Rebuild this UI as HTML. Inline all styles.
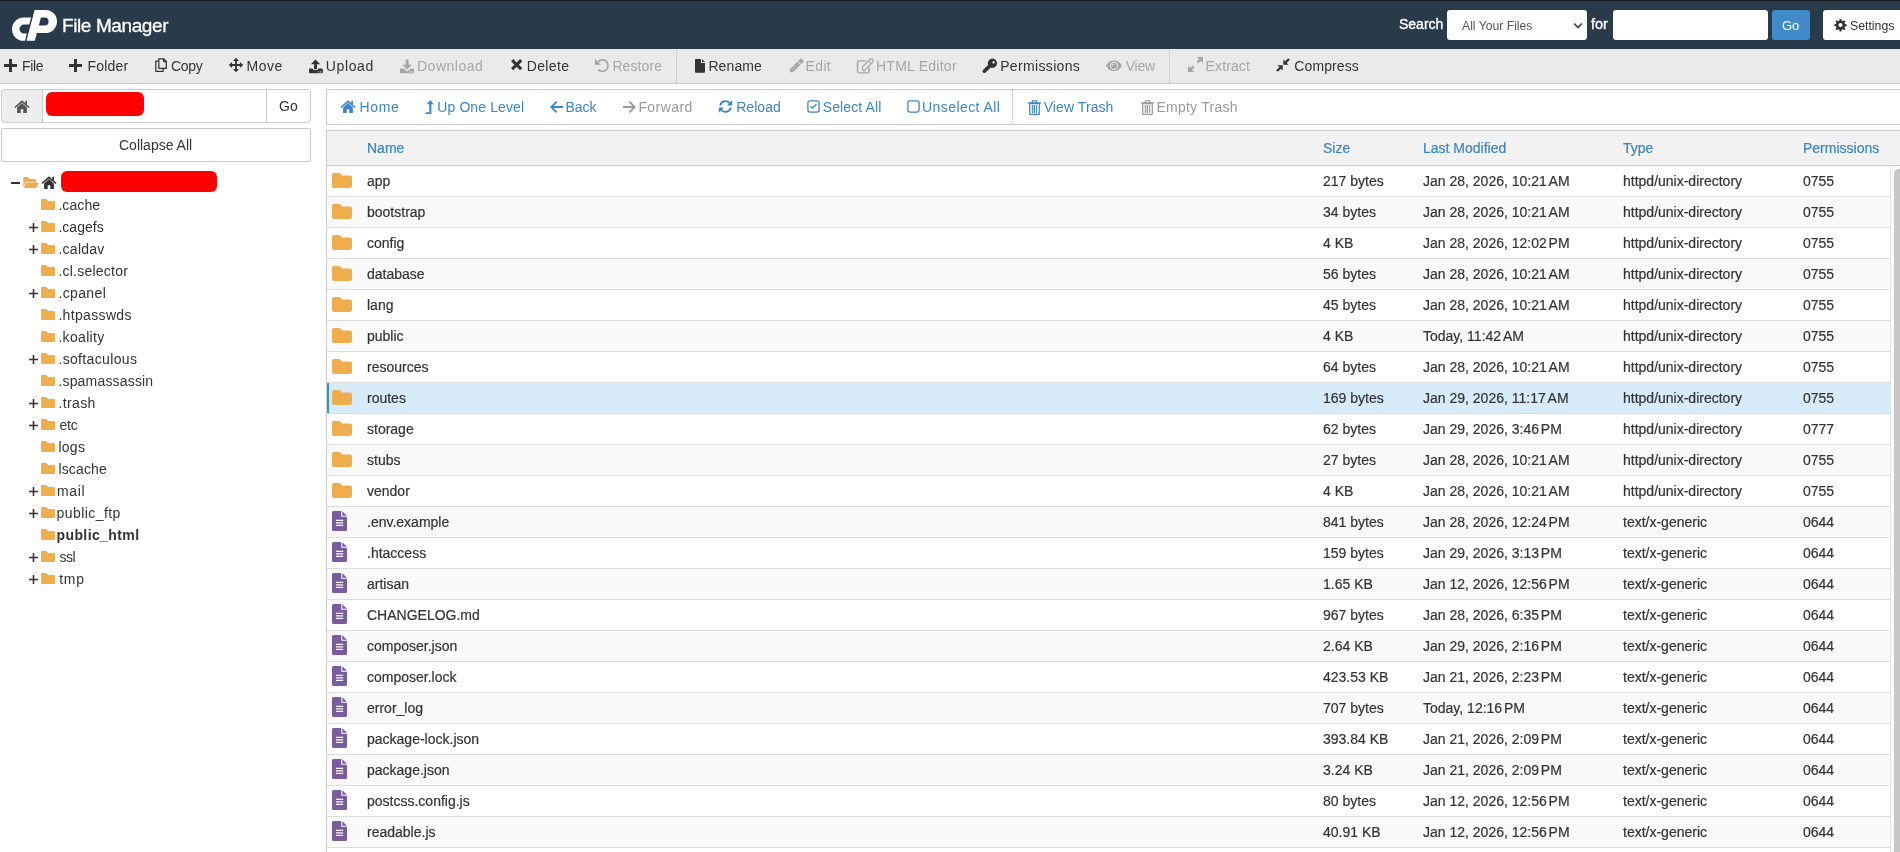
<!DOCTYPE html><html><head><meta charset="utf-8"><style>
*{box-sizing:border-box}
html,body{margin:0;padding:0}
body{-webkit-font-smoothing:antialiased;width:1900px;height:852px;overflow:hidden;position:relative;background:#fff;font-family:"Liberation Sans", sans-serif;color:#333}
.t{position:absolute;white-space:nowrap;line-height:1}
.tb .t{-webkit-text-stroke:0.2px #333}
.abs{position:absolute}
</style></head><body><div style="position:absolute;left:0;top:0;width:1900px;height:852px;will-change:transform;overflow:hidden">

<div class="abs" style="left:0;top:0;width:1900px;height:49px;background:#293a4a;border-top:1px solid #161c22"></div>
<svg class="abs" style="left:0;top:0" width="60" height="49" viewBox="0 0 60 49"><g fill="#fff" fill-rule="evenodd"><path d="M31.1 17.6 L23.6 17.6 A11.6 11.6 0 0 0 23.6 40.8 L25.0 40.8 L26.9 33.5 L23.9 33.5 A4.45 4.45 0 0 1 23.9 24.6 L29.26 24.6 Z"/><path d="M34.6 10 L45.5 10 A11.5 11.5 0 0 1 45.5 33 L36.85 33 L34.8 40.8 L26.5 40.8 Z M40.9 17.6 L44.7 17.6 A3.9 3.9 0 0 1 44.7 25.4 L38.85 25.4 Z"/></g></svg>
<span class="t" style="left:62px;top:16px;font-size:19px;color:#fff;font-weight:normal;letter-spacing:-0.4px;-webkit-text-stroke:0.3px #fff">File Manager</span>
<span class="t" style="left:1399px;top:17px;font-size:14px;color:#fff;font-weight:normal;-webkit-text-stroke:0.35px #fff">Search</span>
<div class="abs" style="left:1447px;top:10px;width:140px;height:30px;background:#fff;border-radius:3px"></div>
<span class="t" style="left:1462px;top:20px;font-size:12.2px;color:#555;font-weight:normal;">All Your Files</span>
<svg class="abs" style="left:1572.5px;top:21.5px" width="11" height="8" viewBox="0 0 11 8"><path d="M1.2 1.5 L5 5.5 L8.8 1.5" stroke="#444" stroke-width="1.8" fill="none"/></svg>
<span class="t" style="left:1591px;top:17px;font-size:14.5px;color:#fff;font-weight:normal;-webkit-text-stroke:0.35px #fff">for</span>
<div class="abs" style="left:1613px;top:10px;width:155px;height:30px;background:#fff;border-radius:3px"></div>
<div class="abs" style="left:1772px;top:10px;width:38px;height:30px;background:#428bca;border-radius:3px"></div>
<span class="t" style="left:1782px;top:19px;font-size:13px;color:#fff;font-weight:normal;">Go</span>
<div class="abs" style="left:1823px;top:10px;width:90px;height:30px;background:#fff;border-radius:3px"></div>
<span class="t" style="left:1850px;top:20px;font-size:12.3px;color:#333;font-weight:normal;">Settings</span>
<svg style="position:absolute;left:1835px;top:19px;color:#333;overflow:visible" width="11" height="12" viewBox="0 0 11 12" fill="#333"><path fill-rule="evenodd" d="M4.6 0h1.8l.3 1.7 1.1.5 1.4-1 1.3 1.3-1 1.4.5 1.1 1.7.3v1.8l-1.7.3-.5 1.1 1 1.4-1.3 1.3-1.4-1-1.1.5-.3 1.7H4.6l-.3-1.7-1.1-.5-1.4 1L.5 9.9l1-1.4L1 7.4-.7 7.1V5.3L1 5l.5-1.1-1-1.4L1.8 1.2l1.4 1 1.1-.5zM5.5 4a2 2 0 1 0 .01 0z"/></svg>
<div class="abs" style="left:0;top:49px;width:1900px;height:35px;background:#eaeaea;border-bottom:1px solid #c9ccd0"></div>
<svg style="position:absolute;left:4px;top:59px;color:#333;overflow:visible" width="13" height="13" viewBox="0 0 13 13" fill="#333"><path d="M5 0h3v5h5v3H8v5H5V8H0V5h5z"/></svg>
<span class="t" style="left:22.1px;top:59px;font-size:14px;color:#333;font-weight:normal;letter-spacing:-0.37px">File</span>
<svg style="position:absolute;left:69px;top:59px;color:#333;overflow:visible" width="13" height="13" viewBox="0 0 13 13" fill="#333"><path d="M5 0h3v5h5v3H8v5H5V8H0V5h5z"/></svg>
<span class="t" style="left:87.5px;top:59px;font-size:14px;color:#333;font-weight:normal;letter-spacing:0.2px">Folder</span>
<svg style="position:absolute;left:155px;top:58px;color:#333;overflow:visible" width="12" height="14" viewBox="0 0 12 14" fill="#333"><g fill="none" stroke="currentColor" stroke-width="1.25" stroke-linejoin="round"><path d="M3.8 0.8H8.6L11.3 3.5V10.4H3.8Z"/><path d="M8.6 0.8V3.5H11.3"/><path d="M3.2 3.2H0.8V13.3H8.2V11"/></g></svg>
<span class="t" style="left:171px;top:59px;font-size:14px;color:#333;font-weight:normal;letter-spacing:-0.33px">Copy</span>
<svg style="position:absolute;left:229.3px;top:58px;color:#333;overflow:visible" width="14" height="14" viewBox="0 0 14 14" fill="#333"><path d="M1 6.1H13V7.9H1Z M6.1 1H7.9V13H6.1Z M7 -0.2L10 3.1H4Z M7 14.2L4 10.9H10Z M-0.2 7L3.1 4V10Z M14.2 7L10.9 10V4Z"/></svg>
<span class="t" style="left:246.6px;top:59px;font-size:14px;color:#333;font-weight:normal;letter-spacing:0.47px">Move</span>
<svg style="position:absolute;left:309px;top:58.5px;color:#333;overflow:visible" width="15" height="15" viewBox="0 0 15 15" fill="#333"><path d="M6.5 0.4L11.2 5.3H1.8Z"/><path d="M5.1 5.2H8V10.2H5.1Z"/><path d="M0 10.6A1 1 0 0 1 1 9.6H3.4Q3.9 11.2 6.5 11.2Q9.1 11.2 9.6 9.6H12.8A1 1 0 0 1 13.8 10.6V13.3A1 1 0 0 1 12.8 14.3H1A1 1 0 0 1 0 13.3Z"/><circle cx="9.6" cy="12.9" r="0.6" fill="#eaeaea"/><circle cx="11.5" cy="12.9" r="0.6" fill="#eaeaea"/></svg>
<span class="t" style="left:325.7px;top:59px;font-size:14px;color:#333;font-weight:normal;letter-spacing:0.66px">Upload</span>
<svg style="position:absolute;left:399.5px;top:58.5px;color:#a6a6a6;overflow:visible" width="15" height="15" viewBox="0 0 15 15" fill="#a6a6a6"><path d="M5.6 0.5H8.6V6H5.6Z"/><path d="M2.4 5.8H11.8L7.1 10.8Z"/><path d="M0 10.6A1 1 0 0 1 1 9.6H3.4L7.1 12.4L10.8 9.6H12.9A1 1 0 0 1 13.9 10.6V13.3A1 1 0 0 1 12.9 14.3H1A1 1 0 0 1 0 13.3Z"/><circle cx="9.8" cy="12.9" r="0.6" fill="#eaeaea"/><circle cx="11.7" cy="12.9" r="0.6" fill="#eaeaea"/></svg>
<span class="t" style="left:417px;top:59px;font-size:14px;color:#a6a6a6;font-weight:normal;letter-spacing:0.5px">Download</span>
<svg style="position:absolute;left:510.6px;top:59.2px;color:#333;overflow:visible" width="11.3" height="11.3" viewBox="0 0 11.3 11.3" fill="#333"><path d="M2.2 0L5.65 3.45 9.1 0 11.3 2.2 7.85 5.65 11.3 9.1 9.1 11.3 5.65 7.85 2.2 11.3 0 9.1 3.45 5.65 0 2.2z"/></svg>
<span class="t" style="left:526.7px;top:59px;font-size:14px;color:#333;font-weight:normal;letter-spacing:0.38px">Delete</span>
<svg style="position:absolute;left:590px;top:55px;color:#a6a6a6;overflow:visible" width="25" height="20" viewBox="0 0 25 20" fill="#a6a6a6"><path d="M8.3 6.5A5.75 5.75 0 1 1 8.1 14.6" fill="none" stroke="currentColor" stroke-width="1.75"/><path d="M4.9 3.8V9.8H10.9Z"/></svg>
<span class="t" style="left:612.4px;top:59px;font-size:14px;color:#a6a6a6;font-weight:normal;letter-spacing:0.1px">Restore</span>
<svg style="position:absolute;left:695px;top:58.9px;color:#333;overflow:visible" width="10" height="13.7" viewBox="0 0 10 13.7" fill="#333"><path d="M0 0.6A0.6 0.6 0 0 1 0.6 0H5.9V4.1H10V13.1A0.6 0.6 0 0 1 9.4 13.7H0.6A0.6 0.6 0 0 1 0 13.1Z"/><path d="M7 0.2L10 3.1H7Z"/></svg>
<span class="t" style="left:708.4px;top:59px;font-size:14px;color:#333;font-weight:normal;letter-spacing:0.12px">Rename</span>
<svg style="position:absolute;left:785px;top:56px;color:#a6a6a6;overflow:visible" width="25" height="20" viewBox="0 0 25 20" fill="#a6a6a6"><g transform="translate(11.1 10.1) rotate(-45)"><path d="M-9.2 0 L-5.6 -2.2 H4.2 V2.2 H-5.6 Z"/><path d="M5 -2.2 H7.8 A1.4 1.4 0 0 1 9.2 -0.8 V0.8 A1.4 1.4 0 0 1 7.8 2.2 H5 Z"/><path d="M-4.6 -0.6 H2.8" stroke="#eaeaea" stroke-width="0.6" stroke-dasharray="1.3 1"/></g></svg>
<span class="t" style="left:805.6px;top:59px;font-size:14px;color:#a6a6a6;font-weight:normal;letter-spacing:0.33px">Edit</span>
<svg style="position:absolute;left:853px;top:55px;color:#a6a6a6;overflow:visible" width="24" height="22" viewBox="0 0 24 22" fill="#a6a6a6"><g fill="none" stroke="currentColor"><path d="M12.9 5.9H6.3A1.8 1.8 0 0 0 4.5 7.7V16.1A1.8 1.8 0 0 0 6.3 17.9H14.3A1.8 1.8 0 0 0 16.1 16.1V12.4" stroke-width="1.4"/><g transform="translate(14.5 9.6) rotate(-45)" stroke-width="1.25"><path d="M-7 2V-0.3L-5 -2H5.2A2 2 0 0 1 5.2 2Z"/><path d="M3.3 -2V2"/></g></g></svg>
<span class="t" style="left:876px;top:59px;font-size:14px;color:#a6a6a6;font-weight:normal;letter-spacing:0.25px">HTML Editor</span>
<svg style="position:absolute;left:980px;top:55px;color:#333;overflow:visible" width="20" height="20" viewBox="0 0 20 20" fill="#333"><path fill-rule="evenodd" d="M12.4 3.6A4.6 4.6 0 1 1 12.39 3.6Z M13.6 6.05A1.25 1.25 0 1 0 13.61 6.05Z"/><path d="M9.6 10.9L4.3 16.2" stroke="currentColor" stroke-width="3.6" stroke-linecap="round"/></svg>
<span class="t" style="left:1000.2px;top:59px;font-size:14px;color:#333;font-weight:normal;letter-spacing:0.34px">Permissions</span>
<svg style="position:absolute;left:1100px;top:55px;color:#a6a6a6;overflow:visible" width="25" height="20" viewBox="0 0 25 20" fill="#a6a6a6"><path fill-rule="evenodd" d="M6 10.7C9.5 3.6 18.5 3.6 22 10.7C18.5 17.8 9.5 17.8 6 10.7Z M14 6.6A4.1 4.1 0 1 0 14.01 6.6Z"/><circle cx="14" cy="10.7" r="3"/><circle cx="12.8" cy="9.5" r="0.85" fill="#eaeaea"/></svg>
<span class="t" style="left:1125.8px;top:59px;font-size:14px;color:#a6a6a6;font-weight:normal;letter-spacing:-0.3px">View</span>
<svg style="position:absolute;left:1187.5px;top:57.3px;color:#a6a6a6;overflow:visible" width="15" height="15" viewBox="0 0 15 15" fill="#a6a6a6"><path d="M15 0V6.3L8.7 0z M0 15V8.7L6.3 15z"/><path d="M9.4 5.6L12.4 2.6M5.6 9.4L2.6 12.4" stroke="currentColor" stroke-width="2.4"/></svg>
<span class="t" style="left:1205.6px;top:59px;font-size:14px;color:#a6a6a6;font-weight:normal;letter-spacing:0.12px">Extract</span>
<svg style="position:absolute;left:1276px;top:58px;color:#333;overflow:visible" width="14" height="14" viewBox="0 0 14 14" fill="#333"><path d="M7.3 6.7V1.4L12.6 6.7z M6.7 7.3H1.4L6.7 12.6z"/><path d="M9.2 4.8L13 1M4.8 9.2L1 13" stroke="currentColor" stroke-width="2.3"/></svg>
<span class="t" style="left:1294.3px;top:59px;font-size:14px;color:#333;font-weight:normal;letter-spacing:0.1px">Compress</span>
<div class="abs" style="left:676px;top:50px;width:0;height:33px;border-left:1px dotted #b8b8b8"></div>
<div class="abs" style="left:1169px;top:50px;width:0;height:33px;border-left:1px dotted #b8b8b8"></div>
<div class="abs" style="left:1px;top:89px;width:310px;height:34px;border:1px solid #ccc;border-radius:4px;background:#fff"></div>
<div class="abs" style="left:1px;top:89px;width:42px;height:34px;border:1px solid #ccc;border-radius:4px 0 0 4px;background:#eee"></div>
<svg style="position:absolute;left:14px;top:100px;color:#555;overflow:visible" width="16" height="13" viewBox="0 0 16 13" fill="#555"><path d="M0.9 7.5L8 1.3 15.1 7.5" fill="none" stroke="currentColor" stroke-width="1.6"/><path d="M11.3 0.8h1.7v3.6h-1.7z"/><path d="M3.1 7.4L8 3.1l4.9 4.3V13H9.3V9.3H6.7V13H3.1z"/></svg>
<div class="abs" style="left:266px;top:89px;width:45px;height:34px;border:1px solid #ccc;border-radius:0 4px 4px 0;background:#fff"></div>
<span class="t" style="left:279px;top:99px;font-size:14px;color:#333;font-weight:normal;">Go</span>
<div class="abs" style="left:46px;top:92px;width:98px;height:24px;background:#f00;border-radius:6px"></div>
<div class="abs" style="left:1px;top:128px;width:310px;height:34px;border:1px solid #ccc;border-radius:2px;background:#fff"></div>
<span class="t" style="left:119px;top:138px;font-size:14px;color:#333;font-weight:normal;">Collapse All</span>
<div class="abs" style="left:11px;top:182px;width:9px;height:2px;background:#333"></div>
<svg style="position:absolute;left:23px;top:177px;color:#f0ad4e;overflow:visible" width="16" height="11" viewBox="0 0 16 11" fill="#f0ad4e"><path d="M0 1.2A1.2 1.2 0 0 1 1.2 0H5.2L6.4 1.9H11.8A1.2 1.2 0 0 1 13 3.1V5.2H2.5L0.3 10.2V1.2Z"/><path d="M2.6 5.4H15.9L13.3 10.9H0.8Z" stroke="#fff" stroke-width="0.7" paint-order="stroke"/></svg>
<svg style="position:absolute;left:41px;top:176px;color:#333;overflow:visible" width="16" height="13" viewBox="0 0 16 13" fill="#333"><path d="M0.9 7.5L8 1.3 15.1 7.5" fill="none" stroke="currentColor" stroke-width="1.6"/><path d="M11.3 0.8h1.7v3.6h-1.7z"/><path d="M3.1 7.4L8 3.1l4.9 4.3V13H9.3V9.3H6.7V13H3.1z"/></svg>
<div class="abs" style="left:61px;top:171px;width:156px;height:21px;background:#f00;border-radius:6px"></div>
<svg style="position:absolute;left:41px;top:199px;color:#f0ad4e;overflow:visible" width="14" height="11" viewBox="0 0 14 11" fill="#f0ad4e"><path d="M0 1.2A1.2 1.2 0 0 1 1.2 0H5.4L7 2H12.8A1.2 1.2 0 0 1 14 3.2V9.8A1.2 1.2 0 0 1 12.8 11H1.2A1.2 1.2 0 0 1 0 9.8Z"/></svg>
<span class="t" style="left:58.4px;top:198px;font-size:14px;color:#333;font-weight:normal;letter-spacing:0.08px">.cache</span>
<svg class="abs" style="left:29px;top:222.7px" width="9" height="9" viewBox="0 0 9 9"><path d="M3.7 0h1.6v3.7H9v1.6H5.3V9H3.7V5.3H0V3.7h3.7z" fill="#333"/></svg>
<svg style="position:absolute;left:41px;top:221px;color:#f0ad4e;overflow:visible" width="14" height="11" viewBox="0 0 14 11" fill="#f0ad4e"><path d="M0 1.2A1.2 1.2 0 0 1 1.2 0H5.4L7 2H12.8A1.2 1.2 0 0 1 14 3.2V9.8A1.2 1.2 0 0 1 12.8 11H1.2A1.2 1.2 0 0 1 0 9.8Z"/></svg>
<span class="t" style="left:58.4px;top:220px;font-size:14px;color:#333;font-weight:normal;letter-spacing:0.02px">.cagefs</span>
<svg class="abs" style="left:29px;top:244.7px" width="9" height="9" viewBox="0 0 9 9"><path d="M3.7 0h1.6v3.7H9v1.6H5.3V9H3.7V5.3H0V3.7h3.7z" fill="#333"/></svg>
<svg style="position:absolute;left:41px;top:243px;color:#f0ad4e;overflow:visible" width="14" height="11" viewBox="0 0 14 11" fill="#f0ad4e"><path d="M0 1.2A1.2 1.2 0 0 1 1.2 0H5.4L7 2H12.8A1.2 1.2 0 0 1 14 3.2V9.8A1.2 1.2 0 0 1 12.8 11H1.2A1.2 1.2 0 0 1 0 9.8Z"/></svg>
<span class="t" style="left:58.4px;top:242px;font-size:14px;color:#333;font-weight:normal;letter-spacing:0.27px">.caldav</span>
<svg style="position:absolute;left:41px;top:265px;color:#f0ad4e;overflow:visible" width="14" height="11" viewBox="0 0 14 11" fill="#f0ad4e"><path d="M0 1.2A1.2 1.2 0 0 1 1.2 0H5.4L7 2H12.8A1.2 1.2 0 0 1 14 3.2V9.8A1.2 1.2 0 0 1 12.8 11H1.2A1.2 1.2 0 0 1 0 9.8Z"/></svg>
<span class="t" style="left:58.4px;top:264px;font-size:14px;color:#333;font-weight:normal;letter-spacing:0.23px">.cl.selector</span>
<svg class="abs" style="left:29px;top:288.7px" width="9" height="9" viewBox="0 0 9 9"><path d="M3.7 0h1.6v3.7H9v1.6H5.3V9H3.7V5.3H0V3.7h3.7z" fill="#333"/></svg>
<svg style="position:absolute;left:41px;top:287px;color:#f0ad4e;overflow:visible" width="14" height="11" viewBox="0 0 14 11" fill="#f0ad4e"><path d="M0 1.2A1.2 1.2 0 0 1 1.2 0H5.4L7 2H12.8A1.2 1.2 0 0 1 14 3.2V9.8A1.2 1.2 0 0 1 12.8 11H1.2A1.2 1.2 0 0 1 0 9.8Z"/></svg>
<span class="t" style="left:58.4px;top:286px;font-size:14px;color:#333;font-weight:normal;letter-spacing:0.37px">.cpanel</span>
<svg style="position:absolute;left:41px;top:309px;color:#f0ad4e;overflow:visible" width="14" height="11" viewBox="0 0 14 11" fill="#f0ad4e"><path d="M0 1.2A1.2 1.2 0 0 1 1.2 0H5.4L7 2H12.8A1.2 1.2 0 0 1 14 3.2V9.8A1.2 1.2 0 0 1 12.8 11H1.2A1.2 1.2 0 0 1 0 9.8Z"/></svg>
<span class="t" style="left:58.4px;top:308px;font-size:14px;color:#333;font-weight:normal;letter-spacing:0.34px">.htpasswds</span>
<svg style="position:absolute;left:41px;top:331px;color:#f0ad4e;overflow:visible" width="14" height="11" viewBox="0 0 14 11" fill="#f0ad4e"><path d="M0 1.2A1.2 1.2 0 0 1 1.2 0H5.4L7 2H12.8A1.2 1.2 0 0 1 14 3.2V9.8A1.2 1.2 0 0 1 12.8 11H1.2A1.2 1.2 0 0 1 0 9.8Z"/></svg>
<span class="t" style="left:58.4px;top:330px;font-size:14px;color:#333;font-weight:normal;letter-spacing:0.33px">.koality</span>
<svg class="abs" style="left:29px;top:354.7px" width="9" height="9" viewBox="0 0 9 9"><path d="M3.7 0h1.6v3.7H9v1.6H5.3V9H3.7V5.3H0V3.7h3.7z" fill="#333"/></svg>
<svg style="position:absolute;left:41px;top:353px;color:#f0ad4e;overflow:visible" width="14" height="11" viewBox="0 0 14 11" fill="#f0ad4e"><path d="M0 1.2A1.2 1.2 0 0 1 1.2 0H5.4L7 2H12.8A1.2 1.2 0 0 1 14 3.2V9.8A1.2 1.2 0 0 1 12.8 11H1.2A1.2 1.2 0 0 1 0 9.8Z"/></svg>
<span class="t" style="left:58.4px;top:352px;font-size:14px;color:#333;font-weight:normal;letter-spacing:0.35px">.softaculous</span>
<svg style="position:absolute;left:41px;top:375px;color:#f0ad4e;overflow:visible" width="14" height="11" viewBox="0 0 14 11" fill="#f0ad4e"><path d="M0 1.2A1.2 1.2 0 0 1 1.2 0H5.4L7 2H12.8A1.2 1.2 0 0 1 14 3.2V9.8A1.2 1.2 0 0 1 12.8 11H1.2A1.2 1.2 0 0 1 0 9.8Z"/></svg>
<span class="t" style="left:58.4px;top:374px;font-size:14px;color:#333;font-weight:normal;letter-spacing:0.18px">.spamassassin</span>
<svg class="abs" style="left:29px;top:398.7px" width="9" height="9" viewBox="0 0 9 9"><path d="M3.7 0h1.6v3.7H9v1.6H5.3V9H3.7V5.3H0V3.7h3.7z" fill="#333"/></svg>
<svg style="position:absolute;left:41px;top:397px;color:#f0ad4e;overflow:visible" width="14" height="11" viewBox="0 0 14 11" fill="#f0ad4e"><path d="M0 1.2A1.2 1.2 0 0 1 1.2 0H5.4L7 2H12.8A1.2 1.2 0 0 1 14 3.2V9.8A1.2 1.2 0 0 1 12.8 11H1.2A1.2 1.2 0 0 1 0 9.8Z"/></svg>
<span class="t" style="left:58.4px;top:396px;font-size:14px;color:#333;font-weight:normal;letter-spacing:0.38px">.trash</span>
<svg class="abs" style="left:29px;top:420.7px" width="9" height="9" viewBox="0 0 9 9"><path d="M3.7 0h1.6v3.7H9v1.6H5.3V9H3.7V5.3H0V3.7h3.7z" fill="#333"/></svg>
<svg style="position:absolute;left:41px;top:419px;color:#f0ad4e;overflow:visible" width="14" height="11" viewBox="0 0 14 11" fill="#f0ad4e"><path d="M0 1.2A1.2 1.2 0 0 1 1.2 0H5.4L7 2H12.8A1.2 1.2 0 0 1 14 3.2V9.8A1.2 1.2 0 0 1 12.8 11H1.2A1.2 1.2 0 0 1 0 9.8Z"/></svg>
<span class="t" style="left:59.4px;top:418px;font-size:14px;color:#333;font-weight:normal;letter-spacing:-0.1px">etc</span>
<svg style="position:absolute;left:41px;top:441px;color:#f0ad4e;overflow:visible" width="14" height="11" viewBox="0 0 14 11" fill="#f0ad4e"><path d="M0 1.2A1.2 1.2 0 0 1 1.2 0H5.4L7 2H12.8A1.2 1.2 0 0 1 14 3.2V9.8A1.2 1.2 0 0 1 12.8 11H1.2A1.2 1.2 0 0 1 0 9.8Z"/></svg>
<span class="t" style="left:58.4px;top:440px;font-size:14px;color:#333;font-weight:normal;letter-spacing:0.27px">logs</span>
<svg style="position:absolute;left:41px;top:463px;color:#f0ad4e;overflow:visible" width="14" height="11" viewBox="0 0 14 11" fill="#f0ad4e"><path d="M0 1.2A1.2 1.2 0 0 1 1.2 0H5.4L7 2H12.8A1.2 1.2 0 0 1 14 3.2V9.8A1.2 1.2 0 0 1 12.8 11H1.2A1.2 1.2 0 0 1 0 9.8Z"/></svg>
<span class="t" style="left:58.4px;top:462px;font-size:14px;color:#333;font-weight:normal;letter-spacing:0.15px">lscache</span>
<svg class="abs" style="left:29px;top:486.7px" width="9" height="9" viewBox="0 0 9 9"><path d="M3.7 0h1.6v3.7H9v1.6H5.3V9H3.7V5.3H0V3.7h3.7z" fill="#333"/></svg>
<svg style="position:absolute;left:41px;top:485px;color:#f0ad4e;overflow:visible" width="14" height="11" viewBox="0 0 14 11" fill="#f0ad4e"><path d="M0 1.2A1.2 1.2 0 0 1 1.2 0H5.4L7 2H12.8A1.2 1.2 0 0 1 14 3.2V9.8A1.2 1.2 0 0 1 12.8 11H1.2A1.2 1.2 0 0 1 0 9.8Z"/></svg>
<span class="t" style="left:56.9px;top:484px;font-size:14px;color:#333;font-weight:normal;letter-spacing:0.67px">mail</span>
<svg class="abs" style="left:29px;top:508.7px" width="9" height="9" viewBox="0 0 9 9"><path d="M3.7 0h1.6v3.7H9v1.6H5.3V9H3.7V5.3H0V3.7h3.7z" fill="#333"/></svg>
<svg style="position:absolute;left:41px;top:507px;color:#f0ad4e;overflow:visible" width="14" height="11" viewBox="0 0 14 11" fill="#f0ad4e"><path d="M0 1.2A1.2 1.2 0 0 1 1.2 0H5.4L7 2H12.8A1.2 1.2 0 0 1 14 3.2V9.8A1.2 1.2 0 0 1 12.8 11H1.2A1.2 1.2 0 0 1 0 9.8Z"/></svg>
<span class="t" style="left:56.5px;top:506px;font-size:14px;color:#333;font-weight:normal;letter-spacing:0.43px">public_ftp</span>
<svg style="position:absolute;left:41px;top:529px;color:#f0ad4e;overflow:visible" width="14" height="11" viewBox="0 0 14 11" fill="#f0ad4e"><path d="M0 1.2A1.2 1.2 0 0 1 1.2 0H5.4L7 2H12.8A1.2 1.2 0 0 1 14 3.2V9.8A1.2 1.2 0 0 1 12.8 11H1.2A1.2 1.2 0 0 1 0 9.8Z"/></svg>
<span class="t" style="left:56.5px;top:528px;font-size:14px;color:#333;font-weight:bold;letter-spacing:0.4px">public_html</span>
<svg class="abs" style="left:29px;top:552.7px" width="9" height="9" viewBox="0 0 9 9"><path d="M3.7 0h1.6v3.7H9v1.6H5.3V9H3.7V5.3H0V3.7h3.7z" fill="#333"/></svg>
<svg style="position:absolute;left:41px;top:551px;color:#f0ad4e;overflow:visible" width="14" height="11" viewBox="0 0 14 11" fill="#f0ad4e"><path d="M0 1.2A1.2 1.2 0 0 1 1.2 0H5.4L7 2H12.8A1.2 1.2 0 0 1 14 3.2V9.8A1.2 1.2 0 0 1 12.8 11H1.2A1.2 1.2 0 0 1 0 9.8Z"/></svg>
<span class="t" style="left:59.4px;top:550px;font-size:14px;color:#333;font-weight:normal;letter-spacing:-0.4px">ssl</span>
<svg class="abs" style="left:29px;top:574.7px" width="9" height="9" viewBox="0 0 9 9"><path d="M3.7 0h1.6v3.7H9v1.6H5.3V9H3.7V5.3H0V3.7h3.7z" fill="#333"/></svg>
<svg style="position:absolute;left:41px;top:573px;color:#f0ad4e;overflow:visible" width="14" height="11" viewBox="0 0 14 11" fill="#f0ad4e"><path d="M0 1.2A1.2 1.2 0 0 1 1.2 0H5.4L7 2H12.8A1.2 1.2 0 0 1 14 3.2V9.8A1.2 1.2 0 0 1 12.8 11H1.2A1.2 1.2 0 0 1 0 9.8Z"/></svg>
<span class="t" style="left:59.2px;top:572px;font-size:14px;color:#333;font-weight:normal;letter-spacing:0.7px">tmp</span>
<div class="abs" style="left:326px;top:89px;width:1580px;height:36px;border:1px solid #ccc;background:#fff"></div>
<div class="abs" style="left:1012px;top:90px;width:0;height:34px;border-left:1px dotted #c0c0c0"></div>
<svg style="position:absolute;left:339.5px;top:99.7px;color:#3a85c6;overflow:visible" width="16" height="13" viewBox="0 0 16 13" fill="#3a85c6"><path d="M0.9 7.5L8 1.3 15.1 7.5" fill="none" stroke="currentColor" stroke-width="1.6"/><path d="M11.3 0.8h1.7v3.6h-1.7z"/><path d="M3.1 7.4L8 3.1l4.9 4.3V13H9.3V9.3H6.7V13H3.1z"/></svg>
<span class="t" style="left:359.4px;top:100px;font-size:14px;color:#3a85c6;font-weight:normal;letter-spacing:0.7px">Home</span>
<svg style="position:absolute;left:425px;top:99.6px;color:#3a85c6;overflow:visible" width="9" height="14" viewBox="0 0 9 14" fill="#3a85c6"><path d="M5.3 0L8.8 4.3H1.8Z"/><path d="M4.3 4h2.1v10h-2.1z"/><path d="M0.2 14L1.4 12.2H4.4V14Z"/></svg>
<span class="t" style="left:437.3px;top:100px;font-size:14px;color:#3a85c6;font-weight:normal;letter-spacing:0.1px">Up One Level</span>
<svg style="position:absolute;left:550px;top:101px;color:#3a85c6;overflow:visible" width="13" height="12" viewBox="0 0 13 12" fill="#3a85c6"><path d="M6 0l1.3 1.3L3.5 5.1H13v1.8H3.5l3.8 3.8L6 12 0 6z"/></svg>
<span class="t" style="left:565.6px;top:100px;font-size:14px;color:#3a85c6;font-weight:normal;letter-spacing:-0.07px">Back</span>
<svg style="position:absolute;left:623px;top:101px;color:#999;overflow:visible" width="13" height="12" viewBox="0 0 13 12" fill="#999"><path d="M7 0L5.7 1.3l3.8 3.8H0v1.8h9.5l-3.8 3.8L7 12l6-6z"/></svg>
<span class="t" style="left:638.4px;top:100px;font-size:14px;color:#999;font-weight:normal;letter-spacing:0.43px">Forward</span>
<svg style="position:absolute;left:718px;top:99.0px;color:#3a85c6;overflow:visible" width="15" height="15" viewBox="0 0 15 15" fill="#3a85c6"><path d="M7.5 1.2a6.3 6.3 0 0 1 4.7 2.1L14.2 1.3V6.4H9.1l1.8-1.8A4.5 4.5 0 0 0 3.2 6.4H1.3A6.3 6.3 0 0 1 7.5 1.2zM13.7 8.6A6.3 6.3 0 0 1 2.8 11.7L0.8 13.7V8.6h5.1L4.1 10.4A4.5 4.5 0 0 0 11.8 8.6z"/></svg>
<span class="t" style="left:736.2px;top:100px;font-size:14px;color:#3a85c6;font-weight:normal;letter-spacing:0.04px">Reload</span>
<svg style="position:absolute;left:807px;top:100.0px;color:#3a85c6;overflow:visible" width="13" height="13" viewBox="0 0 13 13" fill="#3a85c6"><rect x="0.9" y="0.9" width="11.2" height="11.2" rx="1.8" fill="none" stroke="currentColor" stroke-width="1.3"/><path d="M3 6.6l0.9-0.9 1.6 1.6 3.5-3.5 0.9 0.9-4.4 4.4z"/></svg>
<span class="t" style="left:822.8px;top:100px;font-size:14px;color:#3a85c6;font-weight:normal;letter-spacing:0.1px">Select All</span>
<svg style="position:absolute;left:907px;top:100.0px;color:#3a85c6;overflow:visible" width="13" height="13" viewBox="0 0 13 13" fill="#3a85c6"><rect x="0.9" y="0.9" width="11.2" height="11.2" rx="1.8" fill="none" stroke="currentColor" stroke-width="1.3"/></svg>
<span class="t" style="left:922px;top:100px;font-size:14px;color:#3a85c6;font-weight:normal;letter-spacing:0.43px">Unselect All</span>
<svg style="position:absolute;left:1028px;top:100px;color:#3a85c6;overflow:visible" width="13" height="15" viewBox="0 0 13 15" fill="#3a85c6"><path fill-rule="evenodd" d="M3.8 0.2h5.4v2.1h3.8v1.2H0V2.3h3.8zM5 1.2v1.1h3V1.2z M1.1 3.5h10.8V14a1 1 0 0 1-1 1H2.1a1 1 0 0 1-1-1z M2.3 4.2v9.6h8.4V4.2z"/><path d="M3.8 5h1.1v8H3.8zM6 5h1v8H6zM8.1 5h1.1v8H8.1z"/><path d="M4.9 5H6v8H4.9z" opacity="0.35"/></svg>
<span class="t" style="left:1043.7px;top:100px;font-size:14px;color:#3a85c6;font-weight:normal;letter-spacing:0.08px">View Trash</span>
<svg style="position:absolute;left:1141px;top:100px;color:#999;overflow:visible" width="13" height="15" viewBox="0 0 13 15" fill="#999"><path fill-rule="evenodd" d="M3.8 0.2h5.4v2.1h3.8v1.2H0V2.3h3.8zM5 1.2v1.1h3V1.2z M1.1 3.5h10.8V14a1 1 0 0 1-1 1H2.1a1 1 0 0 1-1-1z M2.3 4.2v9.6h8.4V4.2z"/><path d="M3.8 5h1.1v8H3.8zM6 5h1v8H6zM8.1 5h1.1v8H8.1z"/><path d="M4.9 5H6v8H4.9z" opacity="0.35"/></svg>
<span class="t" style="left:1156.4px;top:100px;font-size:14px;color:#999;font-weight:normal;letter-spacing:0.26px">Empty Trash</span>
<div class="abs" style="left:326px;top:130px;width:1580px;height:730px;border:1px solid #ccc;border-right:0"></div>
<div class="abs" style="left:327px;top:131px;width:1580px;height:35px;background:#f2f2f2;border-bottom:1px solid #ccc"></div>
<span class="t" style="left:367px;top:141px;font-size:14px;color:#3a85c6;font-weight:normal;-webkit-text-stroke:0.2px #3a85c6">Name</span>
<span class="t" style="left:1323px;top:141px;font-size:14px;color:#3a85c6;font-weight:normal;-webkit-text-stroke:0.2px #3a85c6">Size</span>
<span class="t" style="left:1423px;top:141px;font-size:14px;color:#3a85c6;font-weight:normal;-webkit-text-stroke:0.2px #3a85c6">Last Modified</span>
<span class="t" style="left:1623px;top:141px;font-size:14px;color:#3a85c6;font-weight:normal;-webkit-text-stroke:0.2px #3a85c6">Type</span>
<span class="t" style="left:1803px;top:141px;font-size:14px;color:#3a85c6;font-weight:normal;-webkit-text-stroke:0.2px #3a85c6">Permissions</span>
<div class="abs" style="left:327px;top:166px;width:1563px;height:31px;background:#fff;border-bottom:1px solid #ddd"></div>
<svg style="position:absolute;left:332px;top:173px;color:#f0ad4e;overflow:visible" width="20" height="15" viewBox="0 0 20 15" fill="#f0ad4e"><path d="M0 2A2 2 0 0 1 2 0H7.8L10 2.6H18A2 2 0 0 1 20 4.6V13A2 2 0 0 1 18 15H2A2 2 0 0 1 0 13Z"/></svg>
<span class="t" style="left:367px;top:174px;font-size:14px;color:#333;font-weight:normal;-webkit-text-stroke:0.2px #333">app</span>
<span class="t" style="left:1323px;top:174px;font-size:14px;color:#333;font-weight:normal;-webkit-text-stroke:0.2px #333">217 bytes</span>
<span class="t" style="left:1423px;top:174px;font-size:14px;color:#333;font-weight:normal;-webkit-text-stroke:0.2px #333">Jan 28, 2026, 10:21<span style="letter-spacing:-1px"> </span>AM</span>
<span class="t" style="left:1623px;top:174px;font-size:14px;color:#333;font-weight:normal;-webkit-text-stroke:0.2px #333">httpd/unix-directory</span>
<span class="t" style="left:1803px;top:174px;font-size:14px;color:#333;font-weight:normal;-webkit-text-stroke:0.2px #333">0755</span>
<div class="abs" style="left:327px;top:197px;width:1563px;height:31px;background:#f9f9f9;border-bottom:1px solid #ddd"></div>
<svg style="position:absolute;left:332px;top:204px;color:#f0ad4e;overflow:visible" width="20" height="15" viewBox="0 0 20 15" fill="#f0ad4e"><path d="M0 2A2 2 0 0 1 2 0H7.8L10 2.6H18A2 2 0 0 1 20 4.6V13A2 2 0 0 1 18 15H2A2 2 0 0 1 0 13Z"/></svg>
<span class="t" style="left:367px;top:205px;font-size:14px;color:#333;font-weight:normal;-webkit-text-stroke:0.2px #333">bootstrap</span>
<span class="t" style="left:1323px;top:205px;font-size:14px;color:#333;font-weight:normal;-webkit-text-stroke:0.2px #333">34 bytes</span>
<span class="t" style="left:1423px;top:205px;font-size:14px;color:#333;font-weight:normal;-webkit-text-stroke:0.2px #333">Jan 28, 2026, 10:21<span style="letter-spacing:-1px"> </span>AM</span>
<span class="t" style="left:1623px;top:205px;font-size:14px;color:#333;font-weight:normal;-webkit-text-stroke:0.2px #333">httpd/unix-directory</span>
<span class="t" style="left:1803px;top:205px;font-size:14px;color:#333;font-weight:normal;-webkit-text-stroke:0.2px #333">0755</span>
<div class="abs" style="left:327px;top:228px;width:1563px;height:31px;background:#fff;border-bottom:1px solid #ddd"></div>
<svg style="position:absolute;left:332px;top:235px;color:#f0ad4e;overflow:visible" width="20" height="15" viewBox="0 0 20 15" fill="#f0ad4e"><path d="M0 2A2 2 0 0 1 2 0H7.8L10 2.6H18A2 2 0 0 1 20 4.6V13A2 2 0 0 1 18 15H2A2 2 0 0 1 0 13Z"/></svg>
<span class="t" style="left:367px;top:236px;font-size:14px;color:#333;font-weight:normal;-webkit-text-stroke:0.2px #333">config</span>
<span class="t" style="left:1323px;top:236px;font-size:14px;color:#333;font-weight:normal;-webkit-text-stroke:0.2px #333">4 KB</span>
<span class="t" style="left:1423px;top:236px;font-size:14px;color:#333;font-weight:normal;-webkit-text-stroke:0.2px #333">Jan 28, 2026, 12:02<span style="letter-spacing:-1px"> </span>PM</span>
<span class="t" style="left:1623px;top:236px;font-size:14px;color:#333;font-weight:normal;-webkit-text-stroke:0.2px #333">httpd/unix-directory</span>
<span class="t" style="left:1803px;top:236px;font-size:14px;color:#333;font-weight:normal;-webkit-text-stroke:0.2px #333">0755</span>
<div class="abs" style="left:327px;top:259px;width:1563px;height:31px;background:#f9f9f9;border-bottom:1px solid #ddd"></div>
<svg style="position:absolute;left:332px;top:266px;color:#f0ad4e;overflow:visible" width="20" height="15" viewBox="0 0 20 15" fill="#f0ad4e"><path d="M0 2A2 2 0 0 1 2 0H7.8L10 2.6H18A2 2 0 0 1 20 4.6V13A2 2 0 0 1 18 15H2A2 2 0 0 1 0 13Z"/></svg>
<span class="t" style="left:367px;top:267px;font-size:14px;color:#333;font-weight:normal;-webkit-text-stroke:0.2px #333">database</span>
<span class="t" style="left:1323px;top:267px;font-size:14px;color:#333;font-weight:normal;-webkit-text-stroke:0.2px #333">56 bytes</span>
<span class="t" style="left:1423px;top:267px;font-size:14px;color:#333;font-weight:normal;-webkit-text-stroke:0.2px #333">Jan 28, 2026, 10:21<span style="letter-spacing:-1px"> </span>AM</span>
<span class="t" style="left:1623px;top:267px;font-size:14px;color:#333;font-weight:normal;-webkit-text-stroke:0.2px #333">httpd/unix-directory</span>
<span class="t" style="left:1803px;top:267px;font-size:14px;color:#333;font-weight:normal;-webkit-text-stroke:0.2px #333">0755</span>
<div class="abs" style="left:327px;top:290px;width:1563px;height:31px;background:#fff;border-bottom:1px solid #ddd"></div>
<svg style="position:absolute;left:332px;top:297px;color:#f0ad4e;overflow:visible" width="20" height="15" viewBox="0 0 20 15" fill="#f0ad4e"><path d="M0 2A2 2 0 0 1 2 0H7.8L10 2.6H18A2 2 0 0 1 20 4.6V13A2 2 0 0 1 18 15H2A2 2 0 0 1 0 13Z"/></svg>
<span class="t" style="left:367px;top:298px;font-size:14px;color:#333;font-weight:normal;-webkit-text-stroke:0.2px #333">lang</span>
<span class="t" style="left:1323px;top:298px;font-size:14px;color:#333;font-weight:normal;-webkit-text-stroke:0.2px #333">45 bytes</span>
<span class="t" style="left:1423px;top:298px;font-size:14px;color:#333;font-weight:normal;-webkit-text-stroke:0.2px #333">Jan 28, 2026, 10:21<span style="letter-spacing:-1px"> </span>AM</span>
<span class="t" style="left:1623px;top:298px;font-size:14px;color:#333;font-weight:normal;-webkit-text-stroke:0.2px #333">httpd/unix-directory</span>
<span class="t" style="left:1803px;top:298px;font-size:14px;color:#333;font-weight:normal;-webkit-text-stroke:0.2px #333">0755</span>
<div class="abs" style="left:327px;top:321px;width:1563px;height:31px;background:#f9f9f9;border-bottom:1px solid #ddd"></div>
<svg style="position:absolute;left:332px;top:328px;color:#f0ad4e;overflow:visible" width="20" height="15" viewBox="0 0 20 15" fill="#f0ad4e"><path d="M0 2A2 2 0 0 1 2 0H7.8L10 2.6H18A2 2 0 0 1 20 4.6V13A2 2 0 0 1 18 15H2A2 2 0 0 1 0 13Z"/></svg>
<span class="t" style="left:367px;top:329px;font-size:14px;color:#333;font-weight:normal;-webkit-text-stroke:0.2px #333">public</span>
<span class="t" style="left:1323px;top:329px;font-size:14px;color:#333;font-weight:normal;-webkit-text-stroke:0.2px #333">4 KB</span>
<span class="t" style="left:1423px;top:329px;font-size:14px;color:#333;font-weight:normal;-webkit-text-stroke:0.2px #333">Today, 11:42<span style="letter-spacing:-1px"> </span>AM</span>
<span class="t" style="left:1623px;top:329px;font-size:14px;color:#333;font-weight:normal;-webkit-text-stroke:0.2px #333">httpd/unix-directory</span>
<span class="t" style="left:1803px;top:329px;font-size:14px;color:#333;font-weight:normal;-webkit-text-stroke:0.2px #333">0755</span>
<div class="abs" style="left:327px;top:352px;width:1563px;height:31px;background:#fff;border-bottom:1px solid #ddd"></div>
<svg style="position:absolute;left:332px;top:359px;color:#f0ad4e;overflow:visible" width="20" height="15" viewBox="0 0 20 15" fill="#f0ad4e"><path d="M0 2A2 2 0 0 1 2 0H7.8L10 2.6H18A2 2 0 0 1 20 4.6V13A2 2 0 0 1 18 15H2A2 2 0 0 1 0 13Z"/></svg>
<span class="t" style="left:367px;top:360px;font-size:14px;color:#333;font-weight:normal;-webkit-text-stroke:0.2px #333">resources</span>
<span class="t" style="left:1323px;top:360px;font-size:14px;color:#333;font-weight:normal;-webkit-text-stroke:0.2px #333">64 bytes</span>
<span class="t" style="left:1423px;top:360px;font-size:14px;color:#333;font-weight:normal;-webkit-text-stroke:0.2px #333">Jan 28, 2026, 10:21<span style="letter-spacing:-1px"> </span>AM</span>
<span class="t" style="left:1623px;top:360px;font-size:14px;color:#333;font-weight:normal;-webkit-text-stroke:0.2px #333">httpd/unix-directory</span>
<span class="t" style="left:1803px;top:360px;font-size:14px;color:#333;font-weight:normal;-webkit-text-stroke:0.2px #333">0755</span>
<div class="abs" style="left:327px;top:383px;width:1563px;height:31px;background:#d7ebf8;border-bottom:1px solid #ddd"></div>
<div class="abs" style="left:327px;top:383px;width:2px;height:30px;background:#2a94dc"></div>
<svg style="position:absolute;left:332px;top:390px;color:#f0ad4e;overflow:visible" width="20" height="15" viewBox="0 0 20 15" fill="#f0ad4e"><path d="M0 2A2 2 0 0 1 2 0H7.8L10 2.6H18A2 2 0 0 1 20 4.6V13A2 2 0 0 1 18 15H2A2 2 0 0 1 0 13Z"/></svg>
<span class="t" style="left:367px;top:391px;font-size:14px;color:#333;font-weight:normal;-webkit-text-stroke:0.2px #333">routes</span>
<span class="t" style="left:1323px;top:391px;font-size:14px;color:#333;font-weight:normal;-webkit-text-stroke:0.2px #333">169 bytes</span>
<span class="t" style="left:1423px;top:391px;font-size:14px;color:#333;font-weight:normal;-webkit-text-stroke:0.2px #333">Jan 29, 2026, 11:17<span style="letter-spacing:-1px"> </span>AM</span>
<span class="t" style="left:1623px;top:391px;font-size:14px;color:#333;font-weight:normal;-webkit-text-stroke:0.2px #333">httpd/unix-directory</span>
<span class="t" style="left:1803px;top:391px;font-size:14px;color:#333;font-weight:normal;-webkit-text-stroke:0.2px #333">0755</span>
<div class="abs" style="left:327px;top:414px;width:1563px;height:31px;background:#fff;border-bottom:1px solid #ddd"></div>
<svg style="position:absolute;left:332px;top:421px;color:#f0ad4e;overflow:visible" width="20" height="15" viewBox="0 0 20 15" fill="#f0ad4e"><path d="M0 2A2 2 0 0 1 2 0H7.8L10 2.6H18A2 2 0 0 1 20 4.6V13A2 2 0 0 1 18 15H2A2 2 0 0 1 0 13Z"/></svg>
<span class="t" style="left:367px;top:422px;font-size:14px;color:#333;font-weight:normal;-webkit-text-stroke:0.2px #333">storage</span>
<span class="t" style="left:1323px;top:422px;font-size:14px;color:#333;font-weight:normal;-webkit-text-stroke:0.2px #333">62 bytes</span>
<span class="t" style="left:1423px;top:422px;font-size:14px;color:#333;font-weight:normal;-webkit-text-stroke:0.2px #333">Jan 29, 2026, 3:46<span style="letter-spacing:-1px"> </span>PM</span>
<span class="t" style="left:1623px;top:422px;font-size:14px;color:#333;font-weight:normal;-webkit-text-stroke:0.2px #333">httpd/unix-directory</span>
<span class="t" style="left:1803px;top:422px;font-size:14px;color:#333;font-weight:normal;-webkit-text-stroke:0.2px #333">0777</span>
<div class="abs" style="left:327px;top:445px;width:1563px;height:31px;background:#f9f9f9;border-bottom:1px solid #ddd"></div>
<svg style="position:absolute;left:332px;top:452px;color:#f0ad4e;overflow:visible" width="20" height="15" viewBox="0 0 20 15" fill="#f0ad4e"><path d="M0 2A2 2 0 0 1 2 0H7.8L10 2.6H18A2 2 0 0 1 20 4.6V13A2 2 0 0 1 18 15H2A2 2 0 0 1 0 13Z"/></svg>
<span class="t" style="left:367px;top:453px;font-size:14px;color:#333;font-weight:normal;-webkit-text-stroke:0.2px #333">stubs</span>
<span class="t" style="left:1323px;top:453px;font-size:14px;color:#333;font-weight:normal;-webkit-text-stroke:0.2px #333">27 bytes</span>
<span class="t" style="left:1423px;top:453px;font-size:14px;color:#333;font-weight:normal;-webkit-text-stroke:0.2px #333">Jan 28, 2026, 10:21<span style="letter-spacing:-1px"> </span>AM</span>
<span class="t" style="left:1623px;top:453px;font-size:14px;color:#333;font-weight:normal;-webkit-text-stroke:0.2px #333">httpd/unix-directory</span>
<span class="t" style="left:1803px;top:453px;font-size:14px;color:#333;font-weight:normal;-webkit-text-stroke:0.2px #333">0755</span>
<div class="abs" style="left:327px;top:476px;width:1563px;height:31px;background:#fff;border-bottom:1px solid #ddd"></div>
<svg style="position:absolute;left:332px;top:483px;color:#f0ad4e;overflow:visible" width="20" height="15" viewBox="0 0 20 15" fill="#f0ad4e"><path d="M0 2A2 2 0 0 1 2 0H7.8L10 2.6H18A2 2 0 0 1 20 4.6V13A2 2 0 0 1 18 15H2A2 2 0 0 1 0 13Z"/></svg>
<span class="t" style="left:367px;top:484px;font-size:14px;color:#333;font-weight:normal;-webkit-text-stroke:0.2px #333">vendor</span>
<span class="t" style="left:1323px;top:484px;font-size:14px;color:#333;font-weight:normal;-webkit-text-stroke:0.2px #333">4 KB</span>
<span class="t" style="left:1423px;top:484px;font-size:14px;color:#333;font-weight:normal;-webkit-text-stroke:0.2px #333">Jan 28, 2026, 10:21<span style="letter-spacing:-1px"> </span>AM</span>
<span class="t" style="left:1623px;top:484px;font-size:14px;color:#333;font-weight:normal;-webkit-text-stroke:0.2px #333">httpd/unix-directory</span>
<span class="t" style="left:1803px;top:484px;font-size:14px;color:#333;font-weight:normal;-webkit-text-stroke:0.2px #333">0755</span>
<div class="abs" style="left:327px;top:507px;width:1563px;height:31px;background:#f9f9f9;border-bottom:1px solid #ddd"></div>
<svg style="position:absolute;left:332px;top:511.4px;color:#7a5c9e;overflow:visible" width="15" height="20" viewBox="0 0 15 20" fill="#7a5c9e"><path fill-rule="evenodd" d="M1.5 0H9.3V5.8H15V18.5A1.5 1.5 0 0 1 13.5 20H1.5A1.5 1.5 0 0 1 0 18.5V1.5A1.5 1.5 0 0 1 1.5 0zM4 8.7h7.2v1.4H4zM4 11.2h7.2v1.3H4zM4 13.7h7.2v1.4H4z"/><path d="M10.4 0.2L14.9 4.7H10.4z"/></svg>
<span class="t" style="left:367px;top:515px;font-size:14px;color:#333;font-weight:normal;-webkit-text-stroke:0.2px #333">.env.example</span>
<span class="t" style="left:1323px;top:515px;font-size:14px;color:#333;font-weight:normal;-webkit-text-stroke:0.2px #333">841 bytes</span>
<span class="t" style="left:1423px;top:515px;font-size:14px;color:#333;font-weight:normal;-webkit-text-stroke:0.2px #333">Jan 28, 2026, 12:24<span style="letter-spacing:-1px"> </span>PM</span>
<span class="t" style="left:1623px;top:515px;font-size:14px;color:#333;font-weight:normal;-webkit-text-stroke:0.2px #333">text/x-generic</span>
<span class="t" style="left:1803px;top:515px;font-size:14px;color:#333;font-weight:normal;-webkit-text-stroke:0.2px #333">0644</span>
<div class="abs" style="left:327px;top:538px;width:1563px;height:31px;background:#fff;border-bottom:1px solid #ddd"></div>
<svg style="position:absolute;left:332px;top:542.4px;color:#7a5c9e;overflow:visible" width="15" height="20" viewBox="0 0 15 20" fill="#7a5c9e"><path fill-rule="evenodd" d="M1.5 0H9.3V5.8H15V18.5A1.5 1.5 0 0 1 13.5 20H1.5A1.5 1.5 0 0 1 0 18.5V1.5A1.5 1.5 0 0 1 1.5 0zM4 8.7h7.2v1.4H4zM4 11.2h7.2v1.3H4zM4 13.7h7.2v1.4H4z"/><path d="M10.4 0.2L14.9 4.7H10.4z"/></svg>
<span class="t" style="left:367px;top:546px;font-size:14px;color:#333;font-weight:normal;-webkit-text-stroke:0.2px #333">.htaccess</span>
<span class="t" style="left:1323px;top:546px;font-size:14px;color:#333;font-weight:normal;-webkit-text-stroke:0.2px #333">159 bytes</span>
<span class="t" style="left:1423px;top:546px;font-size:14px;color:#333;font-weight:normal;-webkit-text-stroke:0.2px #333">Jan 29, 2026, 3:13<span style="letter-spacing:-1px"> </span>PM</span>
<span class="t" style="left:1623px;top:546px;font-size:14px;color:#333;font-weight:normal;-webkit-text-stroke:0.2px #333">text/x-generic</span>
<span class="t" style="left:1803px;top:546px;font-size:14px;color:#333;font-weight:normal;-webkit-text-stroke:0.2px #333">0644</span>
<div class="abs" style="left:327px;top:569px;width:1563px;height:31px;background:#f9f9f9;border-bottom:1px solid #ddd"></div>
<svg style="position:absolute;left:332px;top:573.4px;color:#7a5c9e;overflow:visible" width="15" height="20" viewBox="0 0 15 20" fill="#7a5c9e"><path fill-rule="evenodd" d="M1.5 0H9.3V5.8H15V18.5A1.5 1.5 0 0 1 13.5 20H1.5A1.5 1.5 0 0 1 0 18.5V1.5A1.5 1.5 0 0 1 1.5 0zM4 8.7h7.2v1.4H4zM4 11.2h7.2v1.3H4zM4 13.7h7.2v1.4H4z"/><path d="M10.4 0.2L14.9 4.7H10.4z"/></svg>
<span class="t" style="left:367px;top:577px;font-size:14px;color:#333;font-weight:normal;-webkit-text-stroke:0.2px #333">artisan</span>
<span class="t" style="left:1323px;top:577px;font-size:14px;color:#333;font-weight:normal;-webkit-text-stroke:0.2px #333">1.65 KB</span>
<span class="t" style="left:1423px;top:577px;font-size:14px;color:#333;font-weight:normal;-webkit-text-stroke:0.2px #333">Jan 12, 2026, 12:56<span style="letter-spacing:-1px"> </span>PM</span>
<span class="t" style="left:1623px;top:577px;font-size:14px;color:#333;font-weight:normal;-webkit-text-stroke:0.2px #333">text/x-generic</span>
<span class="t" style="left:1803px;top:577px;font-size:14px;color:#333;font-weight:normal;-webkit-text-stroke:0.2px #333">0644</span>
<div class="abs" style="left:327px;top:600px;width:1563px;height:31px;background:#fff;border-bottom:1px solid #ddd"></div>
<svg style="position:absolute;left:332px;top:604.4px;color:#7a5c9e;overflow:visible" width="15" height="20" viewBox="0 0 15 20" fill="#7a5c9e"><path fill-rule="evenodd" d="M1.5 0H9.3V5.8H15V18.5A1.5 1.5 0 0 1 13.5 20H1.5A1.5 1.5 0 0 1 0 18.5V1.5A1.5 1.5 0 0 1 1.5 0zM4 8.7h7.2v1.4H4zM4 11.2h7.2v1.3H4zM4 13.7h7.2v1.4H4z"/><path d="M10.4 0.2L14.9 4.7H10.4z"/></svg>
<span class="t" style="left:367px;top:608px;font-size:14px;color:#333;font-weight:normal;-webkit-text-stroke:0.2px #333">CHANGELOG.md</span>
<span class="t" style="left:1323px;top:608px;font-size:14px;color:#333;font-weight:normal;-webkit-text-stroke:0.2px #333">967 bytes</span>
<span class="t" style="left:1423px;top:608px;font-size:14px;color:#333;font-weight:normal;-webkit-text-stroke:0.2px #333">Jan 28, 2026, 6:35<span style="letter-spacing:-1px"> </span>PM</span>
<span class="t" style="left:1623px;top:608px;font-size:14px;color:#333;font-weight:normal;-webkit-text-stroke:0.2px #333">text/x-generic</span>
<span class="t" style="left:1803px;top:608px;font-size:14px;color:#333;font-weight:normal;-webkit-text-stroke:0.2px #333">0644</span>
<div class="abs" style="left:327px;top:631px;width:1563px;height:31px;background:#f9f9f9;border-bottom:1px solid #ddd"></div>
<svg style="position:absolute;left:332px;top:635.4px;color:#7a5c9e;overflow:visible" width="15" height="20" viewBox="0 0 15 20" fill="#7a5c9e"><path fill-rule="evenodd" d="M1.5 0H9.3V5.8H15V18.5A1.5 1.5 0 0 1 13.5 20H1.5A1.5 1.5 0 0 1 0 18.5V1.5A1.5 1.5 0 0 1 1.5 0zM4 8.7h7.2v1.4H4zM4 11.2h7.2v1.3H4zM4 13.7h7.2v1.4H4z"/><path d="M10.4 0.2L14.9 4.7H10.4z"/></svg>
<span class="t" style="left:367px;top:639px;font-size:14px;color:#333;font-weight:normal;-webkit-text-stroke:0.2px #333">composer.json</span>
<span class="t" style="left:1323px;top:639px;font-size:14px;color:#333;font-weight:normal;-webkit-text-stroke:0.2px #333">2.64 KB</span>
<span class="t" style="left:1423px;top:639px;font-size:14px;color:#333;font-weight:normal;-webkit-text-stroke:0.2px #333">Jan 29, 2026, 2:16<span style="letter-spacing:-1px"> </span>PM</span>
<span class="t" style="left:1623px;top:639px;font-size:14px;color:#333;font-weight:normal;-webkit-text-stroke:0.2px #333">text/x-generic</span>
<span class="t" style="left:1803px;top:639px;font-size:14px;color:#333;font-weight:normal;-webkit-text-stroke:0.2px #333">0644</span>
<div class="abs" style="left:327px;top:662px;width:1563px;height:31px;background:#fff;border-bottom:1px solid #ddd"></div>
<svg style="position:absolute;left:332px;top:666.4px;color:#7a5c9e;overflow:visible" width="15" height="20" viewBox="0 0 15 20" fill="#7a5c9e"><path fill-rule="evenodd" d="M1.5 0H9.3V5.8H15V18.5A1.5 1.5 0 0 1 13.5 20H1.5A1.5 1.5 0 0 1 0 18.5V1.5A1.5 1.5 0 0 1 1.5 0zM4 8.7h7.2v1.4H4zM4 11.2h7.2v1.3H4zM4 13.7h7.2v1.4H4z"/><path d="M10.4 0.2L14.9 4.7H10.4z"/></svg>
<span class="t" style="left:367px;top:670px;font-size:14px;color:#333;font-weight:normal;-webkit-text-stroke:0.2px #333">composer.lock</span>
<span class="t" style="left:1323px;top:670px;font-size:14px;color:#333;font-weight:normal;-webkit-text-stroke:0.2px #333">423.53 KB</span>
<span class="t" style="left:1423px;top:670px;font-size:14px;color:#333;font-weight:normal;-webkit-text-stroke:0.2px #333">Jan 21, 2026, 2:23<span style="letter-spacing:-1px"> </span>PM</span>
<span class="t" style="left:1623px;top:670px;font-size:14px;color:#333;font-weight:normal;-webkit-text-stroke:0.2px #333">text/x-generic</span>
<span class="t" style="left:1803px;top:670px;font-size:14px;color:#333;font-weight:normal;-webkit-text-stroke:0.2px #333">0644</span>
<div class="abs" style="left:327px;top:693px;width:1563px;height:31px;background:#f9f9f9;border-bottom:1px solid #ddd"></div>
<svg style="position:absolute;left:332px;top:697.4px;color:#7a5c9e;overflow:visible" width="15" height="20" viewBox="0 0 15 20" fill="#7a5c9e"><path fill-rule="evenodd" d="M1.5 0H9.3V5.8H15V18.5A1.5 1.5 0 0 1 13.5 20H1.5A1.5 1.5 0 0 1 0 18.5V1.5A1.5 1.5 0 0 1 1.5 0zM4 8.7h7.2v1.4H4zM4 11.2h7.2v1.3H4zM4 13.7h7.2v1.4H4z"/><path d="M10.4 0.2L14.9 4.7H10.4z"/></svg>
<span class="t" style="left:367px;top:701px;font-size:14px;color:#333;font-weight:normal;-webkit-text-stroke:0.2px #333">error_log</span>
<span class="t" style="left:1323px;top:701px;font-size:14px;color:#333;font-weight:normal;-webkit-text-stroke:0.2px #333">707 bytes</span>
<span class="t" style="left:1423px;top:701px;font-size:14px;color:#333;font-weight:normal;-webkit-text-stroke:0.2px #333">Today, 12:16<span style="letter-spacing:-1px"> </span>PM</span>
<span class="t" style="left:1623px;top:701px;font-size:14px;color:#333;font-weight:normal;-webkit-text-stroke:0.2px #333">text/x-generic</span>
<span class="t" style="left:1803px;top:701px;font-size:14px;color:#333;font-weight:normal;-webkit-text-stroke:0.2px #333">0644</span>
<div class="abs" style="left:327px;top:724px;width:1563px;height:31px;background:#fff;border-bottom:1px solid #ddd"></div>
<svg style="position:absolute;left:332px;top:728.4px;color:#7a5c9e;overflow:visible" width="15" height="20" viewBox="0 0 15 20" fill="#7a5c9e"><path fill-rule="evenodd" d="M1.5 0H9.3V5.8H15V18.5A1.5 1.5 0 0 1 13.5 20H1.5A1.5 1.5 0 0 1 0 18.5V1.5A1.5 1.5 0 0 1 1.5 0zM4 8.7h7.2v1.4H4zM4 11.2h7.2v1.3H4zM4 13.7h7.2v1.4H4z"/><path d="M10.4 0.2L14.9 4.7H10.4z"/></svg>
<span class="t" style="left:367px;top:732px;font-size:14px;color:#333;font-weight:normal;-webkit-text-stroke:0.2px #333">package-lock.json</span>
<span class="t" style="left:1323px;top:732px;font-size:14px;color:#333;font-weight:normal;-webkit-text-stroke:0.2px #333">393.84 KB</span>
<span class="t" style="left:1423px;top:732px;font-size:14px;color:#333;font-weight:normal;-webkit-text-stroke:0.2px #333">Jan 21, 2026, 2:09<span style="letter-spacing:-1px"> </span>PM</span>
<span class="t" style="left:1623px;top:732px;font-size:14px;color:#333;font-weight:normal;-webkit-text-stroke:0.2px #333">text/x-generic</span>
<span class="t" style="left:1803px;top:732px;font-size:14px;color:#333;font-weight:normal;-webkit-text-stroke:0.2px #333">0644</span>
<div class="abs" style="left:327px;top:755px;width:1563px;height:31px;background:#f9f9f9;border-bottom:1px solid #ddd"></div>
<svg style="position:absolute;left:332px;top:759.4px;color:#7a5c9e;overflow:visible" width="15" height="20" viewBox="0 0 15 20" fill="#7a5c9e"><path fill-rule="evenodd" d="M1.5 0H9.3V5.8H15V18.5A1.5 1.5 0 0 1 13.5 20H1.5A1.5 1.5 0 0 1 0 18.5V1.5A1.5 1.5 0 0 1 1.5 0zM4 8.7h7.2v1.4H4zM4 11.2h7.2v1.3H4zM4 13.7h7.2v1.4H4z"/><path d="M10.4 0.2L14.9 4.7H10.4z"/></svg>
<span class="t" style="left:367px;top:763px;font-size:14px;color:#333;font-weight:normal;-webkit-text-stroke:0.2px #333">package.json</span>
<span class="t" style="left:1323px;top:763px;font-size:14px;color:#333;font-weight:normal;-webkit-text-stroke:0.2px #333">3.24 KB</span>
<span class="t" style="left:1423px;top:763px;font-size:14px;color:#333;font-weight:normal;-webkit-text-stroke:0.2px #333">Jan 21, 2026, 2:09<span style="letter-spacing:-1px"> </span>PM</span>
<span class="t" style="left:1623px;top:763px;font-size:14px;color:#333;font-weight:normal;-webkit-text-stroke:0.2px #333">text/x-generic</span>
<span class="t" style="left:1803px;top:763px;font-size:14px;color:#333;font-weight:normal;-webkit-text-stroke:0.2px #333">0644</span>
<div class="abs" style="left:327px;top:786px;width:1563px;height:31px;background:#fff;border-bottom:1px solid #ddd"></div>
<svg style="position:absolute;left:332px;top:790.4px;color:#7a5c9e;overflow:visible" width="15" height="20" viewBox="0 0 15 20" fill="#7a5c9e"><path fill-rule="evenodd" d="M1.5 0H9.3V5.8H15V18.5A1.5 1.5 0 0 1 13.5 20H1.5A1.5 1.5 0 0 1 0 18.5V1.5A1.5 1.5 0 0 1 1.5 0zM4 8.7h7.2v1.4H4zM4 11.2h7.2v1.3H4zM4 13.7h7.2v1.4H4z"/><path d="M10.4 0.2L14.9 4.7H10.4z"/></svg>
<span class="t" style="left:367px;top:794px;font-size:14px;color:#333;font-weight:normal;-webkit-text-stroke:0.2px #333">postcss.config.js</span>
<span class="t" style="left:1323px;top:794px;font-size:14px;color:#333;font-weight:normal;-webkit-text-stroke:0.2px #333">80 bytes</span>
<span class="t" style="left:1423px;top:794px;font-size:14px;color:#333;font-weight:normal;-webkit-text-stroke:0.2px #333">Jan 12, 2026, 12:56<span style="letter-spacing:-1px"> </span>PM</span>
<span class="t" style="left:1623px;top:794px;font-size:14px;color:#333;font-weight:normal;-webkit-text-stroke:0.2px #333">text/x-generic</span>
<span class="t" style="left:1803px;top:794px;font-size:14px;color:#333;font-weight:normal;-webkit-text-stroke:0.2px #333">0644</span>
<div class="abs" style="left:327px;top:817px;width:1563px;height:31px;background:#f9f9f9;border-bottom:1px solid #ddd"></div>
<svg style="position:absolute;left:332px;top:821.4px;color:#7a5c9e;overflow:visible" width="15" height="20" viewBox="0 0 15 20" fill="#7a5c9e"><path fill-rule="evenodd" d="M1.5 0H9.3V5.8H15V18.5A1.5 1.5 0 0 1 13.5 20H1.5A1.5 1.5 0 0 1 0 18.5V1.5A1.5 1.5 0 0 1 1.5 0zM4 8.7h7.2v1.4H4zM4 11.2h7.2v1.3H4zM4 13.7h7.2v1.4H4z"/><path d="M10.4 0.2L14.9 4.7H10.4z"/></svg>
<span class="t" style="left:367px;top:825px;font-size:14px;color:#333;font-weight:normal;-webkit-text-stroke:0.2px #333">readable.js</span>
<span class="t" style="left:1323px;top:825px;font-size:14px;color:#333;font-weight:normal;-webkit-text-stroke:0.2px #333">40.91 KB</span>
<span class="t" style="left:1423px;top:825px;font-size:14px;color:#333;font-weight:normal;-webkit-text-stroke:0.2px #333">Jan 12, 2026, 12:56<span style="letter-spacing:-1px"> </span>PM</span>
<span class="t" style="left:1623px;top:825px;font-size:14px;color:#333;font-weight:normal;-webkit-text-stroke:0.2px #333">text/x-generic</span>
<span class="t" style="left:1803px;top:825px;font-size:14px;color:#333;font-weight:normal;-webkit-text-stroke:0.2px #333">0644</span>
<div class="abs" style="left:327px;top:848px;width:1563px;height:31px;background:#fff;border-bottom:1px solid #ddd"></div>
<svg style="position:absolute;left:332px;top:852.4px;color:#7a5c9e;overflow:visible" width="15" height="20" viewBox="0 0 15 20" fill="#7a5c9e"><path fill-rule="evenodd" d="M1.5 0H9.3V5.8H15V18.5A1.5 1.5 0 0 1 13.5 20H1.5A1.5 1.5 0 0 1 0 18.5V1.5A1.5 1.5 0 0 1 1.5 0zM4 8.7h7.2v1.4H4zM4 11.2h7.2v1.3H4zM4 13.7h7.2v1.4H4z"/><path d="M10.4 0.2L14.9 4.7H10.4z"/></svg>
<div class="abs" style="left:1890px;top:166px;width:12px;height:700px;background:#fafafa;border-left:1px solid #e6e6e6"></div>
<div class="abs" style="left:1894px;top:169px;width:10px;height:700px;background:#c6c6c6;border-radius:5px"></div>
</div></body></html>
